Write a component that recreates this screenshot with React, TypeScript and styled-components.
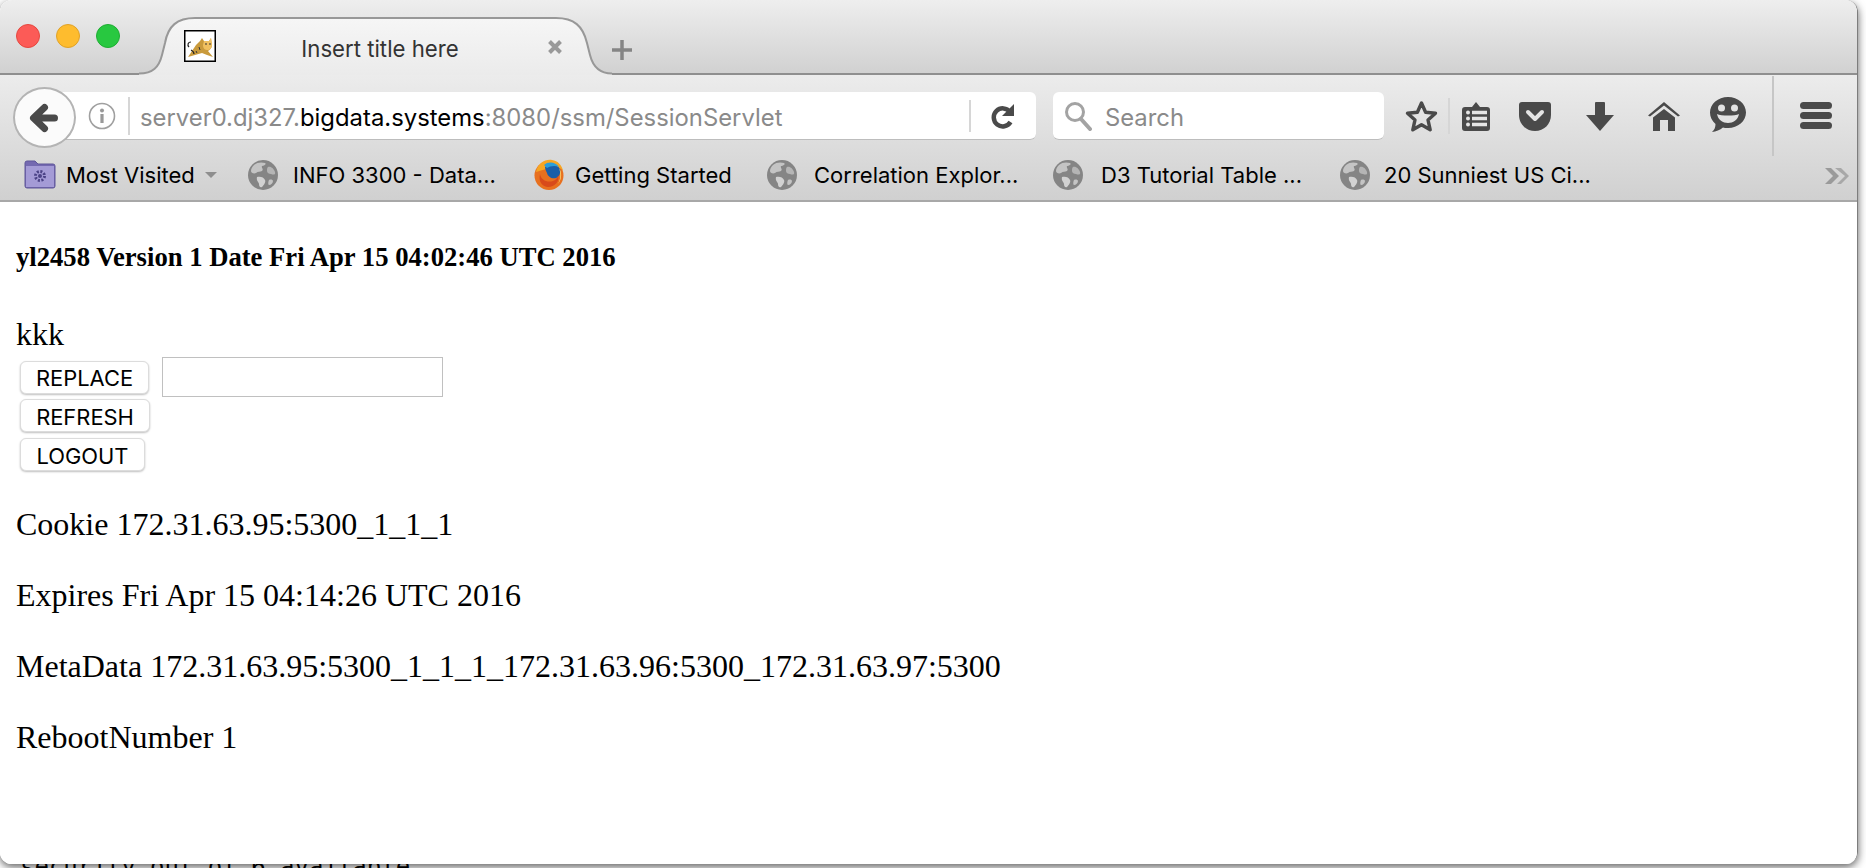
import React from "react";
import styled, { createGlobalStyle } from "styled-components";

const Global = createGlobalStyle`
  html, body { margin: 0; padding: 0; background: #fff; overflow: hidden; }
  * { box-sizing: border-box; }
`;

const UI = `"Inter", "Noto Sans", sans-serif`;
const INK = "#4a4a4a";

const Desktop = styled.div`
  width: 1866px;
  height: 868px;
  position: relative;
  overflow: hidden;
  background: #fff;
`;
const BehindText = styled.div`
  position: absolute;
  left: 20px;
  top: 854px;
  font: 24px/26px "DejaVu Sans Mono", monospace;
  color: #000;
  white-space: pre;
`;
const Win = styled.div`
  position: relative;
  width: 1858px;
  height: 864px;
  background: #fff;
  border-radius: 12px;
  overflow: hidden;
  display: flex;
  flex-direction: column;
  border-right: 1px solid #7d7d7d;
`;
const WinShadow = styled.div`
  position: absolute;
  left: 0;
  top: 0;
  width: 1858px;
  height: 864px;
  border-radius: 12px;
  box-shadow: 0 3px 9px rgba(0, 0, 0, 0.62);
`;
const TabStrip = styled.div`
  height: 75px;
  flex: none;
  display: flex;
  align-items: flex-end;
  background: linear-gradient(#eeeeee, #d1d1d1);
  border-bottom: 2px solid #8f8f8f;
  position: relative;
`;
const Lights = styled.div`
  display: flex;
  gap: 16px;
  margin-left: 16px;
  align-self: flex-start;
  margin-top: 24px;
  width: 123px;
  flex: none;
`;
const Light = styled.span<{ $c: string; $b: string }>`
  width: 24px;
  height: 24px;
  border-radius: 50%;
  background: ${(p) => p.$c};
  border: 1px solid ${(p) => p.$b};
  flex: none;
`;
const Tab = styled.div`
  position: relative;
  width: 473px;
  height: 58px;
  flex: none;
  margin-bottom: -2px;
  display: flex;
  align-items: center;
  padding: 0 0 0 45px;
`;
const TabShape = styled.svg`
  position: absolute;
  left: 0;
  top: 0;
`;
const Favicon = styled.svg`
  position: relative;
  flex: none;
`;
const TabTitle = styled.span`
  position: relative;
  flex: none;
  width: 326px;
  text-align: center;
  font: 22.2px ${UI};
  color: #333;
  padding: 4px 0 0 2px;
`;
const CloseX = styled.svg`
  position: relative;
  flex: none;
  margin: 2px 0 0 5px;
`;
const PlusIcon = styled.svg`
  flex: none;
  margin: 0 0 12px -1px;
`;
const Chrome = styled.div`
  flex: none;
  background: linear-gradient(#ececec, #d0d0d0);
  border-bottom: 2px solid #a8a8a8;
`;
const Nav = styled.div`
  height: 77px;
  display: flex;
  align-items: flex-start;
  padding-top: 17px;
  position: relative;
`;
const BackButton = styled.div`
  position: absolute;
  left: 13px;
  top: 12px;
  width: 63px;
  height: 61px;
  border-radius: 50%;
  background: #fbfbfb;
  border: 2px solid #b4b4b4;
  display: flex;
  align-items: center;
  justify-content: center;
  z-index: 1;
`;
const UrlBar = styled.div`
  margin-left: 50px;
  width: 986px;
  height: 48px;
  flex: none;
  background: #fff;
  border-radius: 6px;
  border-bottom: 1px solid #bdbdbd;
  display: flex;
  align-items: center;
  padding-left: 38px;
`;
const UrlSep = styled.span<{ $h: number }>`
  width: 2px;
  height: ${(p) => p.$h}px;
  background: #d6d6d6;
  flex: none;
`;
const UrlText = styled.span`
  flex: none;
  width: 829px;
  margin-left: 10px;
  padding-top: 4px;
  font: 23.85px ${UI};
  color: #8a8a8a;
  white-space: nowrap;
`;
const Domain = styled.span`
  color: #000;
`;
const InfoGap = styled.span`
  width: 12px;
  flex: none;
`;
const ReloadIcon = styled.svg`
  flex: none;
  margin-left: 20px;
`;
const SearchBar = styled.div`
  margin-left: 17px;
  width: 331px;
  height: 48px;
  flex: none;
  background: #fff;
  border-radius: 6px;
  border-bottom: 1px solid #bdbdbd;
  display: flex;
  align-items: center;
  padding-left: 11px;
  gap: 13px;
  font: 23.8px ${UI};
  color: #8a8a8a;
`;
const SearchLabel = styled.span`
  padding-top: 4px;
`;
const ToolIcons = styled.div`
  display: flex;
  height: 48px;
  margin-left: 20px;
  flex: none;
`;
const Cell = styled.div<{ $w: number }>`
  width: ${(p) => p.$w}px;
  flex: none;
  display: flex;
  align-items: center;
  justify-content: center;
  position: relative;
`;
const TallSep = styled.span`
  position: absolute;
  left: 22px;
  top: -16px;
  width: 2px;
  height: 80px;
  background: #c6c6c6;
`;
const Smile = styled.svg`
  margin-bottom: 3px;
`;
const Bookmarks = styled.div`
  height: 48px;
  display: flex;
  align-items: center;
  padding: 0 0 3px 24px;
  position: relative;
`;
const Bookmark = styled.div<{ $w: number; $gap: number }>`
  flex: 0 0 ${(p) => p.$w}px;
  display: flex;
  align-items: center;
  gap: ${(p) => p.$gap}px;
  font: 22px ${UI};
  color: #000;
  white-space: nowrap;
`;
const Caret = styled.span`
  width: 0;
  height: 0;
  border-left: 6px solid transparent;
  border-right: 6px solid transparent;
  border-top: 6px solid #8e8e8e;
`;
const MoreIcon = styled.svg`
  position: absolute;
  left: 1825px;
  top: 16px;
`;
const Page = styled.main`
  flex: 1;
  background: #fff;
  padding: 41px 0 0 16px;
  font-family: "Liberation Serif", "Times New Roman", serif;
  color: #000;
`;
const Heading = styled.h4`
  margin: 0;
  font-size: 26.65px;
  line-height: 28px;
  font-weight: 700;
`;
const Line = styled.p<{ $top: number }>`
  margin: ${(p) => p.$top}px 0 0;
  font-size: 32px;
  line-height: 38px;
`;
const Row = styled.div<{ $top: number }>`
  display: flex;
  align-items: center;
  margin: ${(p) => p.$top}px 0 0 4px;
`;
const Btn = styled.button<{ $w: number }>`
  width: ${(p) => p.$w}px;
  height: 33px;
  padding: 2px 0 0;
  background: #fff;
  border: 1px solid #dcdcdc;
  border-radius: 6px;
  box-shadow: 0 1px 2px rgba(0, 0, 0, 0.25);
  font: 21.9px ${UI};
  color: #000;
`;
const TextBox = styled.input`
  width: 281px;
  height: 40px;
  margin-left: 13px;
  border: 1.5px solid #c0c0c0;
  background: #fff;
`;

const Globe = () => (
  <svg width="30" height="30" viewBox="0 0 30 30">
    <circle cx="15" cy="15" r="15" fill="#858585" />
    <path d="M6 5c3-3 8-3 11-2 2 1-1 3-3 3-1 2 2 3 0 5-2 1-4 0-6 2-2 1-5 0-5-2 0-2 1-4 3-6Z" fill="#c4c4c4" />
    <path d="M20 7c3-1 6 2 7 5 1 3-2 3-4 2-2 0-4-1-4-3 0-2 0-3 1-4Z" fill="#b5b5b5" />
    <path d="M9 17c3-1 7 0 8 3 1 2-1 5-3 7-2 1-3-1-3-3 0-2-3-3-2-7Z" fill="#d2d2d2" />
    <path d="M21 20c2-1 4 0 4 1 0 2-2 4-4 4-1 0-1-3 0-5Z" fill="#c4c4c4" />
  </svg>
);

export default function App() {
  return (
    <Desktop>
      <Global />
      <BehindText>security out of 6 available</BehindText>
      <WinShadow />
      <Win>
        <TabStrip>
          <Lights>
            <Light $c="#fc5b57" $b="#e5483f" />
            <Light $c="#febc2e" $b="#e0a228" />
            <Light $c="#28c840" $b="#1fad33" />
          </Lights>
          <Tab>
            <TabShape width="473" height="58" viewBox="0 0 473 58">
              <defs>
                <linearGradient id="tabfill" x1="0" y1="0" x2="0" y2="1">
                  <stop offset="0" stopColor="#f6f6f6" />
                  <stop offset="1" stopColor="#ebebeb" />
                </linearGradient>
              </defs>
              <path
                d="M0 56.5C14 56.5 20 50 23 38L26 26C29 9 38 1 56 1L417 1C435 1 444 9 448 26L451 38C454 50 461 56.5 473 56.5L473 58L0 58Z"
                fill="url(#tabfill)"
              />
              <path
                d="M0 56.5C14 56.5 20 50 23 38L26 26C29 9 38 1 56 1L417 1C435 1 444 9 448 26L451 38C454 50 461 56.5 473 56.5"
                fill="none"
                stroke="#989898"
                strokeWidth="2"
              />
            </TabShape>
            <Favicon width="32" height="32" viewBox="0 0 32 32">
              <rect x="0.75" y="0.75" width="30.5" height="30.5" fill="#fff" stroke="#000" strokeWidth="1.5" />
              <path d="M18 8l2 3h5l2-3 1 7c0 3-2 5-4 6l5 6-6-2-5-2-7 2-7 2 4-6 4-6 4-4Z" fill="#c99a3c" />
              <path d="M20 11h5l2-3 1 7c0 3-2 5-5 5s-4-3-4-5Z" fill="#f0c060" />
              <path d="M7 12c-3 0-4 3-2 5M7 20c2 1 3 2 3 4" fill="none" stroke="#222" strokeWidth="1.2" />
              <path d="M21 14h2M25 14h2M15 17l1 3M12 21l1 2" stroke="#333" strokeWidth="1" />
            </Favicon>
            <TabTitle>Insert title here</TabTitle>
            <CloseX width="16" height="16" viewBox="0 0 16 16">
              <path d="M2.5 2.5L13.5 13.5M13.5 2.5L2.5 13.5" stroke="#999" strokeWidth="4" />
            </CloseX>
          </Tab>
          <PlusIcon width="22" height="22" viewBox="0 0 22 22">
            <path d="M11 1V21M1 11H21" stroke="#858585" strokeWidth="3.5" />
          </PlusIcon>
        </TabStrip>
        <Chrome>
          <Nav>
            <BackButton>
              <svg width="32" height="30" viewBox="0 0 32 30">
                <path
                  d="M25.5 15H6M15.5 4.500L4.500 15L15.500 25.500"
                  fill="none"
                  stroke={INK}
                  strokeWidth="7"
                  strokeLinecap="round"
                  strokeLinejoin="round"
                />
              </svg>
            </BackButton>
            <UrlBar>
              <svg width="28" height="28" viewBox="0 0 28 28">
                <circle cx="14" cy="14" r="12.5" fill="none" stroke="#a0a0a0" strokeWidth="1.6" />
                <rect x="12.4" y="12" width="3.2" height="9" fill="#999" />
                <circle cx="14" cy="8.5" r="2" fill="#999" />
              </svg>
              <InfoGap />
              <UrlSep $h={38} />
              <UrlText>
                server0.dj327.<Domain>bigdata.systems</Domain>:8080/ssm/SessionServlet
              </UrlText>
              <UrlSep $h={32} />
              <ReloadIcon width="24" height="26" viewBox="0 0 24 26">
                <path d="M19 9A9 9 0 1 0 19.5 19" fill="none" stroke={INK} strokeWidth="4.5" />
                <path d="M23 1V13H11Z" fill={INK} />
              </ReloadIcon>
            </UrlBar>
            <SearchBar>
              <svg width="28" height="30" viewBox="0 0 28 30">
                <circle cx="11" cy="11" r="8.5" fill="none" stroke="#a3a3a3" strokeWidth="3" />
                <path d="M17 18L26 28" stroke="#a3a3a3" strokeWidth="4" strokeLinecap="round" />
              </svg>
              <SearchLabel>Search</SearchLabel>
            </SearchBar>
            <ToolIcons>
              <Cell $w={34}>
                <svg width="33" height="33" viewBox="0 0 33 33">
                  <path
                    d="M16.5 3L20.6 12.2L30.5 13.2L23 19.9L25.2 29.8L16.5 24.7L7.8 29.8L10 19.9L2.5 13.2L12.4 12.2Z"
                    fill="none"
                    stroke={INK}
                    strokeWidth="3.4"
                    strokeLinejoin="round"
                  />
                </svg>
              </Cell>
              <Cell $w={22}>
                <UrlSep $h={36} />
              </Cell>
              <Cell $w={32}>
                <svg width="28" height="30" viewBox="0 0 28 30">
                  <path
                    d="M3 6H10L14 1L18 6H25A3 3 0 0 1 28 9V27A3 3 0 0 1 25 30H3A3 3 0 0 1 0 27V9A3 3 0 0 1 3 6Z"
                    fill={INK}
                  />
                  <circle cx="6" cy="11.5" r="2" fill="#e6e6e6" />
                  <circle cx="6" cy="17.5" r="2" fill="#e6e6e6" />
                  <circle cx="6" cy="23.5" r="2" fill="#e6e6e6" />
                  <path d="M10 11.5H25M10 17.5H25M10 23.5H25" stroke="#e6e6e6" strokeWidth="3.4" />
                </svg>
              </Cell>
              <Cell $w={86}>
                <svg width="32" height="29" viewBox="0 0 32 29">
                  <path d="M3 0H29A3 3 0 0 1 32 3V13C32 22 25 29 16 29C7 29 0 22 0 13V3A3 3 0 0 1 3 0Z" fill={INK} />
                  <path d="M9 10L16 17L23 10" fill="none" stroke="#e4e4e4" strokeWidth="4" strokeLinecap="round" strokeLinejoin="round" />
                </svg>
              </Cell>
              <Cell $w={44}>
                <svg width="28" height="29" viewBox="0 0 28 29">
                  <path d="M9 1A1 1 0 0 1 10 0H18A1 1 0 0 1 19 1V13H28L14 29L0 13H9Z" fill={INK} />
                </svg>
              </Cell>
              <Cell $w={84}>
                <svg width="32" height="29" viewBox="0 0 32 29">
                  <path d="M0 13.5L16 0L32 13.5L30 14.5L16 3.5L2 14.5Z" fill={INK} />
                  <path d="M16 7L27 15.5V29H20V18H12V29H5V15.5Z" fill={INK} />
                </svg>
              </Cell>
              <Cell $w={44}>
                <Smile width="36" height="35" viewBox="0 0 36 35">
                  <path d="M18 0C28 0 36 7 36 15.5C36 24 28 31 18 31C16 31 14 30.8 13 30.4C10 33 6 34.5 2 35C4.500 33 5.500 30 5.500 27C2 24 0 20 0 15.500C0 7 8 0 18 0Z" fill={INK} />
                  <circle cx="11.500" cy="11" r="3.500" fill="#e2e2e2" />
                  <circle cx="24.500" cy="11" r="3.500" fill="#e2e2e2" />
                  <path d="M7 17C11 19 25 19 29 17C28 23 23 26 18 26C13 26 8 23 7 17Z" fill="#e2e2e2" />
                </Smile>
              </Cell>
              <Cell $w={46}>
                <TallSep />
              </Cell>
              <Cell $w={40}>
                <svg width="32" height="28" viewBox="0 0 32 28">
                  <rect x="0" y="0" width="32" height="7" rx="3.500" fill={INK} />
                  <rect x="0" y="10" width="32" height="7" rx="3.500" fill={INK} />
                  <rect x="0" y="20" width="32" height="7" rx="3.500" fill={INK} />
                </svg>
              </Cell>
            </ToolIcons>
          </Nav>
          <Bookmarks>
            <Bookmark $w={224} $gap={10}>
              <svg width="32" height="29" viewBox="0 0 32 29">
                <path d="M1 3A2 2 0 0 1 3 1H11L14 4H29A2 2 0 0 1 31 6V26A2 2 0 0 1 29 28H3A2 2 0 0 1 1 26Z" fill="#7469b0" stroke="#5f5699" />
                <rect x="2" y="6" width="28" height="21" fill="#a49bd6" />
                <circle cx="16" cy="16" r="4.500" fill="none" stroke="#4b4386" strokeWidth="3" strokeDasharray="2 1.500" />
                <circle cx="16" cy="16" r="2" fill="#4b4386" />
              </svg>
              Most Visited
              <Caret />
            </Bookmark>
            <Bookmark $w={286} $gap={15}>
              <Globe />
              INFO 3300 - Data...
            </Bookmark>
            <Bookmark $w={233} $gap={11}>
              <svg width="30" height="32" viewBox="0 0 30 32">
                <circle cx="15" cy="16.500" r="14.500" fill="#e8701f" />
                <path d="M2 13C4 4 11 0 18 1C24 2 28 6 29 12C27 9 24 8 22 8L12 10Z" fill="#f6a623" />
                <path d="M11 8C15 4 23 5 26 10C27 14 25 18 22 19C18 20 14 18 13 14C12 12 11 10 11 8Z" fill="#1a5ea8" />
                <path d="M10 6C14 2 22 3 25 8C21 6 16 7 13 9Z" fill="#2b9fd9" />
                <path d="M6 15C7 21 13 24 19 22C22 21 24 18 24 16C26 22 21 28 14 28C9 28 4 23 6 15Z" fill="#d84a1b" />
                <path d="M25 9C28 13 28 20 24 25C27 20 27 14 25 9Z" fill="#fde27a" />
              </svg>
              Getting Started
            </Bookmark>
            <Bookmark $w={286} $gap={17}>
              <Globe />
              Correlation Explor...
            </Bookmark>
            <Bookmark $w={287} $gap={18}>
              <Globe />
              D3 Tutorial Table ...
            </Bookmark>
            <Bookmark $w={300} $gap={14}>
              <Globe />
              20 Sunniest US Ci...
            </Bookmark>
            <MoreIcon width="24" height="16" viewBox="0 0 24 16">
              <path d="M0 0H6L14 8L6 16H0L8 8Z" fill="#9a9a9a" />
              <path d="M10 0H16L24 8L16 16H12L20 8Z" fill="#a8a8a8" />
            </MoreIcon>
          </Bookmarks>
        </Chrome>
        <Page>
          <Heading>yl2458 Version 1 Date Fri Apr 15 04:02:46 UTC 2016</Heading>
          <Line $top={44}>kkk</Line>
          <Row $top={4}>
            <Btn $w={129}>REPLACE</Btn>
            <TextBox />
          </Row>
          <Row $top={2}>
            <Btn $w={130}>REFRESH</Btn>
          </Row>
          <Row $top={6}>
            <Btn $w={125}>LOGOUT</Btn>
          </Row>
          <Line $top={34}>Cookie 172.31.63.95:5300_1_1_1</Line>
          <Line $top={33}>Expires Fri Apr 15 04:14:26 UTC 2016</Line>
          <Line $top={33}>MetaData 172.31.63.95:5300_1_1_1_172.31.63.96:5300_172.31.63.97:5300</Line>
          <Line $top={33}>RebootNumber 1</Line>
        </Page>
      </Win>
    </Desktop>
  );
}
